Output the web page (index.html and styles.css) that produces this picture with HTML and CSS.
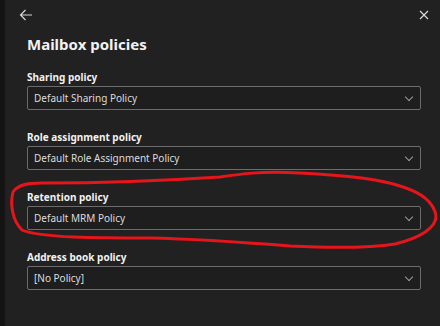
FILE: index.html
```html
<!DOCTYPE html>
<html lang="en">
<head>
    <meta charset="UTF-8">
    <title>Mailbox policies</title>
    <link rel="stylesheet" href="styles.css">
</head>
<body>
    <div class="panel">
        <div class="panel-header">
            <button class="icon-btn" aria-label="Back">
                <svg width="14" height="12" viewBox="0 0 14 12"><path d="M13 6H1.5M6.5 1 1.5 6l5 5" fill="none" stroke="#d8d8d8" stroke-width="1.2"/></svg>
            </button>
            <button class="icon-btn" aria-label="Close">
                <svg width="10" height="10" viewBox="0 0 10 10"><path d="M1 1l8 8M9 1 1 9" fill="none" stroke="#d8d8d8" stroke-width="1.2"/></svg>
            </button>
        </div>
        <h1 class="title">Mailbox policies</h1>

        <div class="field">
            <label class="field-label">Sharing policy</label>
            <div class="select"><span>Default Sharing Policy</span><i class="chevron"></i></div>
        </div>
        <div class="field">
            <label class="field-label">Role assignment policy</label>
            <div class="select"><span>Default Role Assignment Policy</span><i class="chevron"></i></div>
        </div>
        <div class="field">
            <label class="field-label">Retention policy</label>
            <div class="select"><span>Default MRM Policy</span><i class="chevron"></i></div>
        </div>
        <div class="field">
            <label class="field-label">Address book policy</label>
            <div class="select"><span>[No Policy]</span><i class="chevron"></i></div>
        </div>

        <!-- hand drawn highlight round the retention field -->
        <svg class="scribble" width="440" height="326" viewBox="0 0 440 326">
            <path d="M42 183 C30 183 18 184 13 192 C10 204 12 220 22 230 C40 238 100 238 150 238 C200 239 240 242 290 246 C330 248 370 248 395 244 C420 238 436 228 436 216 C434 202 420 192 400 186 C380 179 340 175 300 173 C260 171 240 174 220 177 C160 181 100 183 42 183"
                  fill="none" stroke="#e5151b" stroke-width="3" stroke-linecap="round" stroke-linejoin="round"/>
        </svg>
    </div>
</body>
</html>
```

FILE: styles.css
```css
html, body {
    margin: 0;
    height: 100%;
}
body {
    background: #141414;
    font-family: "Noto Sans", "Open Sans", sans-serif;
    color: #f2f2f2;
    overflow: hidden;
}
.panel {
    position: relative;
    margin-left: 5px;
    height: 100%;
    background: #212121;
    padding: 0 19px 0 22px;
}
.panel-header {
    height: 30px;
    display: flex;
    justify-content: space-between;
    align-items: center;
    margin-left: -9px;
    margin-right: -11px;
}
.icon-btn {
    background: none;
    border: none;
    padding: 0;
    width: 16px;
    height: 16px;
    display: flex;
    align-items: center;
    justify-content: center;
}
.title {
    margin: 4px 0 16px;
    font-size: 15px;
    line-height: 20px;
    font-weight: 700;
}
.field {
    margin-bottom: 20px;
}
.field-label {
    display: block;
    font-size: 10px;
    line-height: 14px;
    font-weight: 700;
    margin-bottom: 2px;
}
.select {
    height: 24px;
    box-sizing: border-box;
    border: 1px solid #6c6c6c;
    border-radius: 2px;
    background: #1e1e1e;
    display: flex;
    align-items: center;
    justify-content: space-between;
    padding: 0 8px 0 6px;
    font-size: 10px;
    color: #dcdcdc;
}
.chevron {
    width: 5px;
    height: 5px;
    border-right: 1px solid #9a9a9a;
    border-bottom: 1px solid #9a9a9a;
    transform: rotate(45deg);
    margin-top: -3px;
}
.scribble {
    position: absolute;
    left: -5px;
    top: 0;
    pointer-events: none;
}
```
